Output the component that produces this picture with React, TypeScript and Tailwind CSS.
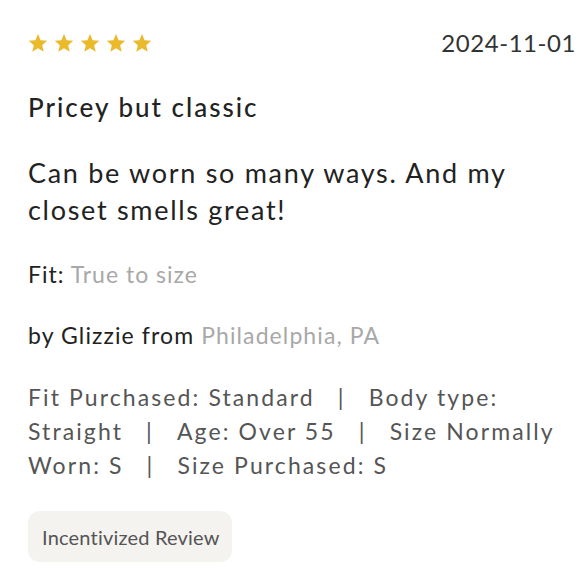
import React from "react";

const Star = () => (
  <svg width="20" height="20" viewBox="0 0 24 24" className="shrink-0">
    <path d="M12 1.2l3.1 7.4 8 .7-6.1 5.3 1.9 7.9L12 18.3l-6.9 4.2 1.9-7.9L.9 9.3l8-.7z" fill="#ebb92c" />
  </svg>
);

const Sep = () => <span className="mx-[23px]">|</span>;

export default function App() {
  return (
    <div
      className="w-[580px] h-[580px] bg-white pl-[28px] pr-[4px] pt-[31px] text-[#222]"
      style={{ fontFamily: "Lato, 'Open Sans', sans-serif" }}
    >
      <div className="flex items-center justify-between h-[24px]">
        <div className="flex gap-[6px]">
          <Star />
          <Star />
          <Star />
          <Star />
          <Star />
        </div>
        <div className="text-[24px] leading-[24px] text-[#333] tracking-[0.55px]">2024-11-01</div>
      </div>
      <h2 className="mt-[36px] text-[26px] leading-[32px] font-medium text-[#222] tracking-[2px]">
        Pricey but classic
      </h2>
      <p className="mt-[31px] text-[27px] leading-[37px] text-[#222] tracking-[1.7px]">
        Can be worn so many ways. And my closet smells great!
      </p>
      <div className="mt-[31px] text-[23px] leading-[30px] tracking-[1px]">
        <span className="text-[#222]">Fit:</span> <span className="text-[#a8a8a8]">True to size</span>
      </div>
      <div className="mt-[31px] text-[23px] leading-[30px] tracking-[1.1px]">
        <span className="text-[#222]">by Glizzie from</span> <span className="text-[#a8a8a8]">Philadelphia, PA</span>
      </div>
      <p className="mt-[30px] text-[23px] leading-[34px] text-[#555] tracking-[2.1px]">
        Fit Purchased: Standard<Sep />Body type: Straight<Sep />Age: Over 55<Sep />Size Normally Worn: S<Sep />Size Purchased: S
      </p>
      <div className="mt-[29px] inline-flex items-center h-[51px] pl-[14px] pr-[12px] rounded-[12px] bg-[#f4f3f0] text-[20px] text-[#555] tracking-[0.2px]">
        Incentivized Review
      </div>
    </div>
  );
}
